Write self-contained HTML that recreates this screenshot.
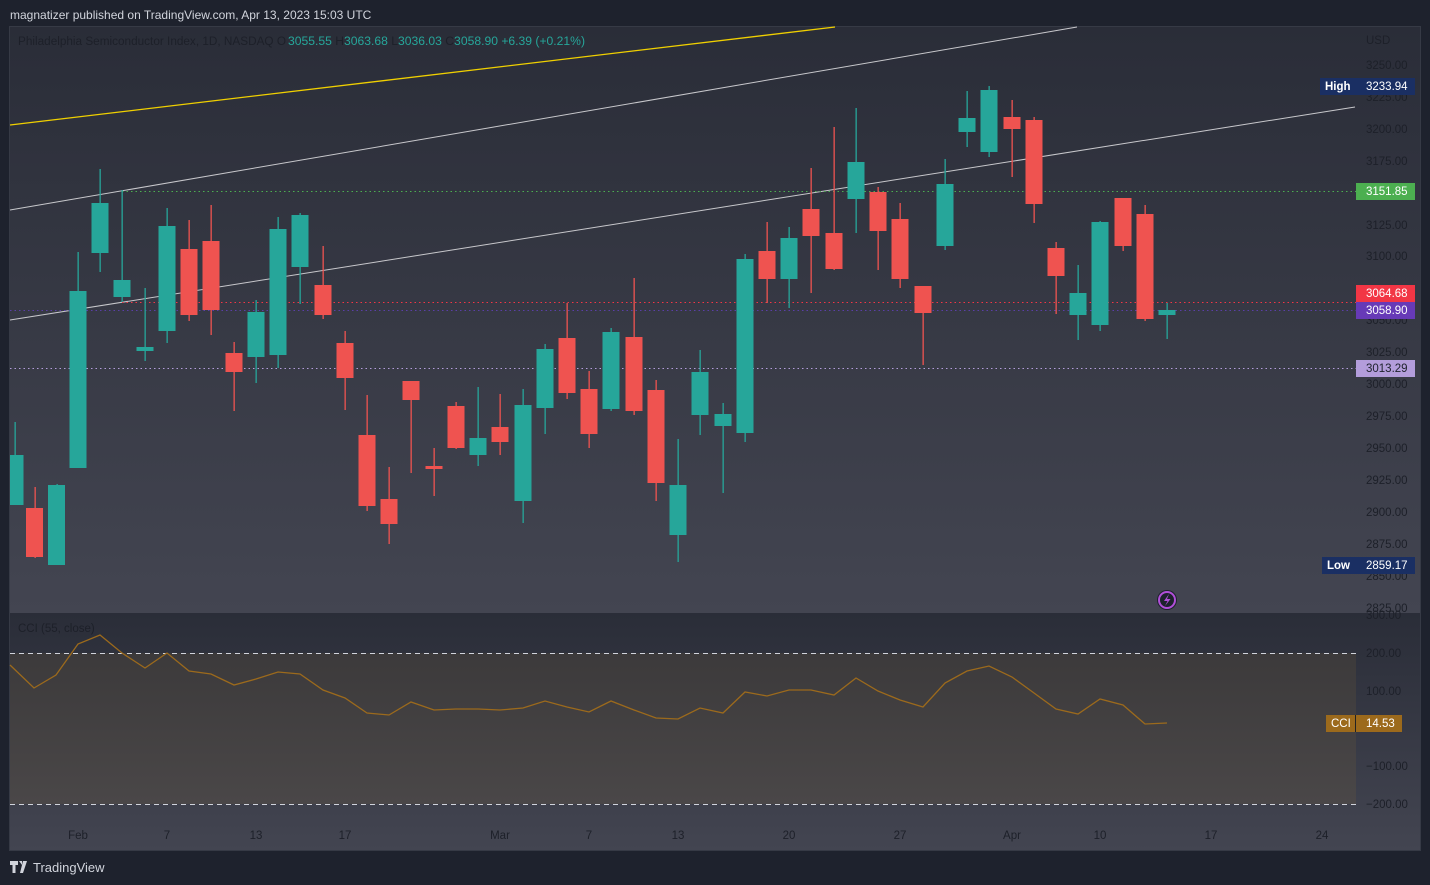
<!DOCTYPE html>
<html><head><meta charset="utf-8"><style>
body{margin:0;width:1430px;height:885px;background:#1e222d;overflow:hidden;font-family:"Liberation Sans",sans-serif}
svg{position:absolute;left:0;top:0}
</style></head><body>
<svg width="1430" height="885" xmlns="http://www.w3.org/2000/svg" font-family="Liberation Sans, sans-serif">
<defs>
<linearGradient id="g1" x1="0" y1="0" x2="0" y2="1"><stop offset="0" stop-color="#2a2d38"/><stop offset="1" stop-color="#434551"/></linearGradient>
<linearGradient id="g2" x1="0" y1="0" x2="0" y2="1"><stop offset="0" stop-color="#2a2d38"/><stop offset="1" stop-color="#434551"/></linearGradient>
<linearGradient id="g3" x1="0" y1="0" x2="0" y2="1"><stop offset="0" stop-color="#3c3a3b"/><stop offset="1" stop-color="#4a4748"/></linearGradient>
</defs>
<rect x="0" y="0" width="1430" height="885" fill="#1e222d"/>
<text x="10" y="19" font-size="12" fill="#d1d4dc">magnatizer published on TradingView.com, Apr 13, 2023 15:03 UTC</text>
<rect x="9.5" y="26.5" width="1411" height="824" fill="#2a2e39" stroke="#363a45"/>
<rect x="10" y="27" width="1410" height="586" fill="url(#g1)"/>
<rect x="10" y="613" width="1410" height="237" fill="url(#g2)"/>
<rect x="10" y="653" width="1346" height="151" fill="url(#g3)"/>
<g font-size="11.5" fill="#1d2029">
<text x="1366" y="44">USD</text>
<text x="1366" y="69">3250.00</text><text x="1366" y="101">3225.00</text><text x="1366" y="133">3200.00</text><text x="1366" y="165">3175.00</text><text x="1366" y="229">3125.00</text><text x="1366" y="260">3100.00</text><text x="1366" y="324">3050.00</text><text x="1366" y="356">3025.00</text><text x="1366" y="388">3000.00</text><text x="1366" y="420">2975.00</text><text x="1366" y="452">2950.00</text><text x="1366" y="484">2925.00</text><text x="1366" y="516">2900.00</text><text x="1366" y="548">2875.00</text><text x="1366" y="580">2850.00</text><text x="1366" y="612">2825.00</text>
<text x="1366" y="619">300.00</text><text x="1366" y="657">200.00</text><text x="1366" y="695">100.00</text><text x="1366" y="732">0.00</text><text x="1366" y="770">−100.00</text><text x="1366" y="808">−200.00</text>
</g>
<g font-size="11.5" fill="#1d2029" text-anchor="middle">
<text x="78" y="839">Feb</text><text x="167" y="839">7</text><text x="256" y="839">13</text><text x="345" y="839">17</text><text x="500" y="839">Mar</text><text x="589" y="839">7</text><text x="678" y="839">13</text><text x="789" y="839">20</text><text x="900" y="839">27</text><text x="1012" y="839">Apr</text><text x="1100" y="839">10</text><text x="1211" y="839">17</text><text x="1322" y="839">24</text>
</g>
<text x="18" y="45" font-size="11.5" fill="#1d2029" textLength="268" lengthAdjust="spacingAndGlyphs">Philadelphia Semiconductor Index, 1D, NASDAQ  O</text>
<text x="288" y="45" font-size="11.5" fill="#26a69a" textLength="297" lengthAdjust="spacingAndGlyphs">3055.55 <tspan fill="#1d2029">H</tspan>3063.68 <tspan fill="#1d2029">L</tspan>3036.03 <tspan fill="#1d2029">C</tspan>3058.90  +6.39 (+0.21%)</text>
<text x="18" y="632" font-size="11.5" fill="#1d2029">CCI (55, close)</text>
<line x1="10" y1="125" x2="835" y2="27" stroke="#f0d000" stroke-width="1.3"/>
<line x1="10" y1="210" x2="1077" y2="27" stroke="#c8c8cc" stroke-width="1"/>
<line x1="10" y1="320" x2="1355" y2="107" stroke="#c8c8cc" stroke-width="1"/>
<line x1="122" y1="191.5" x2="1356" y2="191.5" stroke="#4caf50" stroke-dasharray="1.5 3"/>
<line x1="122" y1="302.5" x2="1356" y2="302.5" stroke="#f23645" stroke-dasharray="1.5 3"/>
<line x1="10" y1="310.5" x2="1356" y2="310.5" stroke="#5b3fa8" stroke-dasharray="1.5 3"/>
<line x1="10" y1="368.5" x2="1356" y2="368.5" stroke="#b39ddb" stroke-dasharray="1.5 3"/>
<line x1="10" y1="653.5" x2="1356" y2="653.5" stroke="#d1d4dc" stroke-dasharray="5 4"/>
<line x1="10" y1="804.5" x2="1356" y2="804.5" stroke="#d1d4dc" stroke-dasharray="5 4"/>
<g id="c"></g>
<polyline fill="none" stroke="#9c6a1c" stroke-width="1.3" points="10,665 34,688 56,675 78,644 100,635 122,653 145,668 167,653 189,671 211,674 234,685 256,679 278,672 300,674 323,690 345,698 367,713 389,715 411,702 434,710 456,709 478,709 500,710 523,708 545,701 567,707 589,712 611,701 634,710 656,718 678,719 700,708 723,713 745,692 767,696 789,690 811,690 834,695 856,678 878,691 900,700 923,707 945,683 967,671 989,666 1012,677 1034,693 1056,709 1078,714 1100,699 1123,705 1145,724 1167,723"/>
<rect x="1320" y="78" width="36" height="17" fill="#1a2f63"/><text x="1325" y="90" font-size="11.5" font-weight="bold" fill="#fff">High</text>
<rect x="1356" y="78" width="59" height="17" fill="#1a2f63"/><text x="1366" y="90" font-size="11.5" fill="#fff">3233.94</text>
<rect x="1356" y="183" width="59" height="17" fill="#4caf50"/><text x="1366" y="195" font-size="11.5" fill="#fff">3151.85</text>
<rect x="1356" y="285" width="59" height="17" fill="#f23645"/><text x="1366" y="297" font-size="11.5" fill="#fff">3064.68</text>
<rect x="1356" y="302" width="59" height="17" fill="#673ab7"/><text x="1366" y="314" font-size="11.5" fill="#fff">3058.90</text>
<rect x="1356" y="360" width="59" height="17" fill="#b39ddb"/><text x="1366" y="372" font-size="11.5" fill="#1e222d">3013.29</text>
<rect x="1322" y="557" width="34" height="17" fill="#1a2f63"/><text x="1327" y="569" font-size="11.5" font-weight="bold" fill="#fff">Low</text>
<rect x="1356" y="557" width="59" height="17" fill="#1a2f63"/><text x="1366" y="569" font-size="11.5" fill="#fff">2859.17</text>
<rect x="1326" y="715" width="30" height="17" fill="#9c6a1c"/><text x="1331" y="727" font-size="11.5" fill="#fff">CCI</text>
<rect x="1356" y="715" width="46" height="17" fill="#9c6a1c"/><text x="1366" y="727" font-size="11.5" fill="#fff">14.53</text>
<line x1="1355.5" y1="715" x2="1355.5" y2="732" stroke="#222"/>
<circle cx="1167" cy="600" r="10" fill="#1e222d"/><circle cx="1167" cy="600" r="8" fill="none" stroke="#b04fd8" stroke-width="2"/>
<path d="M1169 594 L1164 601 L1167.5 601 L1165 606 L1170.5 599 L1167 599 Z" fill="#b04fd8"/>
<path d="M10 861h8v4h-2.5v8h-3v-8h-2.5z M19 861h3l0 4z M23 861h4l-4 12h-3z" fill="#d1d4dc"/>
<text x="33" y="872" font-size="13" fill="#d1d4dc">TradingView</text>
</svg>
<script>
var d=[[15,455,505,422,505,1],[34.5,508,557,487,558,0],[56.5,485,565,484,565,1],[78,291,468,252,468,1],[100,203,253,169,272,1],[122,280,297,190,302,1],[145,347,351,288,361,1],[167,226,331,208,343,1],[189,249,315,220,321,0],[211,241,310,205,335,0],[234,353,372,342,411,0],[256,312,357,300,383,1],[278,229,355,217,368,1],[300,215,267,213,304,1],[323,285,315,246,319,0],[345,343,378,331,410,0],[367,435,506,395,511,0],[389,499,524,467,544,0],[411,381,400,381,473,0],[434,466,469,448,496,0],[456,406,448,402,449,0],[478,438,455,387,466,1],[500,427,442,394,455,0],[523,405,501,389,523,1],[545,349,408,344,434,1],[567,338,393,303,399,0],[589,389,434,371,448,0],[611,332,409,328,411,1],[634,337,411,278,415,0],[656,390,483,380,501,0],[678,485,535,439,562,1],[700,372,415,350,435,1],[723,414,426,403,493,1],[745,259,433,254,442,1],[767,251,279,222,303,0],[789,238,279,227,308,1],[811,209,236,168,293,0],[834,233,269,127,270,0],[856,162,199,108,233,1],[878,192,231,187,270,0],[900,219,279,203,288,0],[923,286,313,286,365,0],[945,184,246,159,250,1],[967,118,132,91,147,1],[989,90,152,86,157,1],[1012,117,129,100,177,0],[1034,120,204,117,223,0],[1056,248,276,242,314,0],[1078,293,315,265,340,1],[1100,222,325,221,331,1],[1123,198,246,198,251,0],[1145,214,319,205,321,0],[1167,310,315,303,339,1]];
var s='';d.forEach(function(c){var col=c[5]?'#26a69a':'#ef5350';var x=c[0];var bx=Math.max(10,x-8.5);var bw=(x-8.5<10)?(x+8.5-10):17;
s+='<rect x="'+(Math.round(x)-0.5)+'" y="'+c[3]+'" width="1.3" height="'+(c[4]-c[3])+'" fill="'+col+'"/>';
s+='<rect x="'+bx+'" y="'+c[1]+'" width="'+bw+'" height="'+Math.max(3,c[2]-c[1])+'" fill="'+col+'"/>';});
document.getElementById('c').innerHTML=s;
</script>
</body></html>
